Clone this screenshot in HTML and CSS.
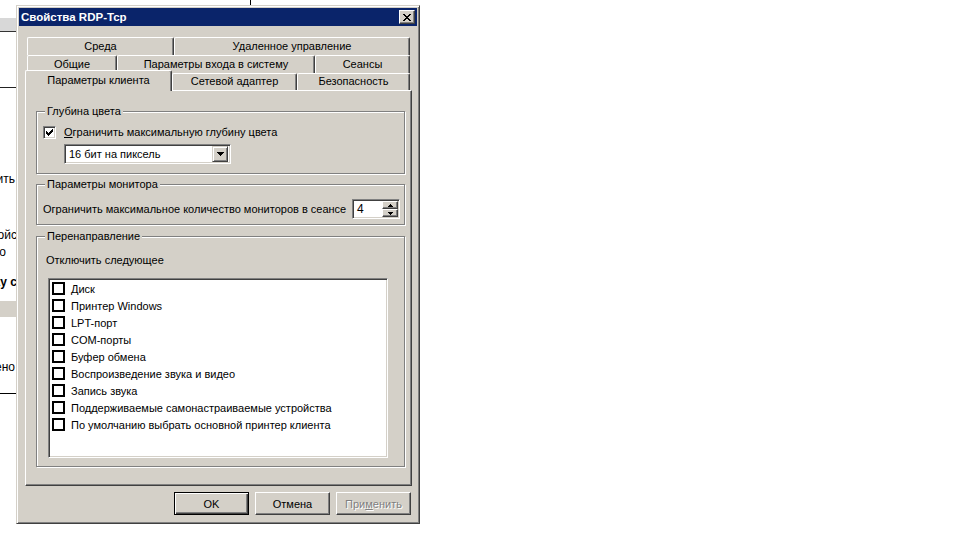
FILE: index.html
```html
<!DOCTYPE html>
<html lang="ru">
<head>
    <meta charset="UTF-8">
    <title>Свойства RDP-Tcp</title>
    <link rel="stylesheet" href="styles.css">
</head>
<body>
    <!-- окно на заднем плане, видна только полоска слева -->
    <div class="desk-window">
        <div class="dw-toolbar"></div>
        <div class="dw-rule"></div>
        <div class="dw-row dw-r1"><span>Разрешить</span></div>
        <div class="dw-row dw-r2"><span>Свойс</span></div>
        <div class="dw-row dw-r3"><span>Это</span></div>
        <div class="dw-row dw-r4 dw-bold"><span>Настройку с</span></div>
        <div class="dw-band"></div>
        <div class="dw-row dw-r5"><span>Подключено</span></div>
    </div>

    <div class="dialog">
        <div class="titlebar">
            <span class="title">Свойства RDP-Tcp</span>
            <button class="close-btn">
                <svg width="8" height="7" viewBox="0 0 8 7"><path d="M0 0h2v1H0z M6 0h2v1H6z M1 1h2v1H1z M5 1h2v1H5z M2 2h4v1H2z M3 3h2v1H3z M2 4h4v1H2z M1 5h2v1H1z M5 5h2v1H5z M0 6h2v1H0z M6 6h2v1H6z" fill="#000"/></svg>
            </button>
        </div>

        <div class="dlg-body">
            <div class="tabs">
                <div class="tab-row row-1">
                    <div class="tab">Среда</div>
                    <div class="tab">Удаленное управление</div>
                </div>
                <div class="tab-row row-2">
                    <div class="tab">Общие</div>
                    <div class="tab">Параметры входа в систему</div>
                    <div class="tab">Сеансы</div>
                </div>
                <div class="tab-row row-3">
                    <div class="tab active">Параметры клиента</div>
                    <div class="tab">Сетевой адаптер</div>
                    <div class="tab">Безопасность</div>
                </div>
            </div>

            <div class="tab-panel">
                <fieldset class="group group-color">
                    <legend>Глубина цвета</legend>
                    <div class="check-row">
                        <span class="check3d">
                            <svg width="7" height="7" viewBox="0 0 7 7"><path d="M6 0h1v1H6z M5 1h2v1H5z M0 2h1v1H0z M4 2h3v1H4z M0 3h2v1H0z M3 3h3v1H3z M0 4h5v1H0z M1 5h3v1H1z M2 6h1v1H2z" fill="#000"/></svg>
                        </span>
                        <span><u>О</u>граничить максимальную глубину цвета</span>
                    </div>
                    <div class="combo">
                        <span class="combo-text">16 бит на пиксель</span>
                        <span class="combo-btn">
                            <svg width="7" height="4" viewBox="0 0 7 4"><path d="M0 0h7v1H0z M1 1h5v1H1z M2 2h3v1H2z M3 3h1v1H3z" fill="#000"/></svg>
                        </span>
                    </div>
                </fieldset>

                <fieldset class="group group-monitor">
                    <legend>Параметры монитора</legend>
                    <div class="monitor-row">
                        <span>Ограничить максимальное количество мониторов в сеансе</span>
                        <div class="spin">
                            <span class="spin-text">4</span>
                            <div class="spin-btns">
                                <span class="spin-btn">
                                    <svg width="5" height="3" viewBox="0 0 5 3"><path d="M2 0h1v1H2z M1 1h3v1H1z M0 2h5v1H0z" fill="#000"/></svg>
                                </span>
                                <span class="spin-btn">
                                    <svg width="5" height="3" viewBox="0 0 5 3"><path d="M0 0h5v1H0z M1 1h3v1H1z M2 2h1v1H2z" fill="#000"/></svg>
                                </span>
                            </div>
                        </div>
                    </div>
                </fieldset>

                <fieldset class="group group-redirect">
                    <legend>Перенаправление</legend>
                    <div class="redirect-caption">Отключить следующее</div>
                    <div class="listbox">
                        <div class="list-item"><span class="flat-check"></span>Диск</div>
                        <div class="list-item"><span class="flat-check"></span>Принтер Windows</div>
                        <div class="list-item"><span class="flat-check"></span>LPT-порт</div>
                        <div class="list-item"><span class="flat-check"></span>COM-порты</div>
                        <div class="list-item"><span class="flat-check"></span>Буфер обмена</div>
                        <div class="list-item"><span class="flat-check"></span>Воспроизведение звука и видео</div>
                        <div class="list-item"><span class="flat-check"></span>Запись звука</div>
                        <div class="list-item"><span class="flat-check"></span>Поддерживаемые самонастраиваемые устройства</div>
                        <div class="list-item"><span class="flat-check"></span>По умолчанию выбрать основной принтер клиента</div>
                    </div>
                </fieldset>
            </div>
        </div>

        <div class="dlg-buttons">
            <button class="btn btn-default">OK</button>
            <button class="btn">Отмена</button>
            <button class="btn btn-disabled">При<u>м</u>енить</button>
        </div>
    </div>
</body>
</html>
```

FILE: styles.css
```css
body, html {
    margin: 0;
    padding: 0;
}

body {
    width: 960px;
    height: 546px;
    overflow: hidden;
    position: relative;
    background: #fff;
    color: #000;
    font-family: "Liberation Sans", "DejaVu Sans", sans-serif;
    font-size: 11px;
    line-height: 14px;
}

/* фоновое окно */
.desk-window {
    position: absolute;
    left: -240px;
    top: -20px;
    width: 491px;
    height: 414px;
    box-sizing: border-box;
    border: 1px solid #000;
    background: #fff;
    display: flex;
    flex-direction: column;
    font-size: 12px;
}

.dw-toolbar {
    margin-top: 37px;
    height: 13px;
    background: #d8d8d8;
    border-bottom: 1px solid #333;
}

.dw-rule {
    margin-top: 55px;
    height: 1px;
    background: #222;
}

.dw-row {
    width: 256px;
    box-sizing: border-box;
    display: flex;
    justify-content: flex-end;
    white-space: nowrap;
    height: 14px;
}

.dw-r1 { margin-top: 84px; padding-right: 2px; }
.dw-r2 { margin-top: 42px; }
.dw-r3 { margin-top: 3px; padding-right: 11px; }
.dw-r4 { margin-top: 16px; }
.dw-r5 { margin-top: 43px; padding-right: 2px; }

.dw-bold {
    font-weight: bold;
}

.dw-band {
    margin-top: 12px;
    height: 16px;
    background: #d4d0c8;
}

/* диалог */
.dialog {
    position: absolute;
    left: 16px;
    top: 5px;
    width: 404px;
    height: 519px;
    box-sizing: border-box;
    padding: 2px;
    background: #d4d0c8;
    border: 1px solid;
    border-color: #d4d0c8 #404040 #404040 #d4d0c8;
    box-shadow: inset 1px 1px #fff, inset -1px -1px #808080;
    display: flex;
    flex-direction: column;
}

.titlebar {
    height: 18px;
    background: #0a246a;
    color: #fff;
    display: flex;
    align-items: center;
    justify-content: space-between;
    padding: 0 2px 0 2px;
}

.title {
    font-weight: bold;
    font-size: 11.5px;
}

.close-btn {
    width: 16px;
    height: 14px;
    padding: 0;
    box-sizing: border-box;
    background: #d4d0c8;
    border: 1px solid;
    border-color: #fff #404040 #404040 #fff;
    box-shadow: inset -1px -1px #808080;
    display: flex;
    align-items: center;
    justify-content: center;
}

.dlg-body {
    flex: 1;
    display: flex;
    flex-direction: column;
    padding: 11px 5px 0 6px;
}

/* вкладки */
.tabs {
    padding: 0 2px;
}

.tab-row {
    display: grid;
    height: 18px;
}

.row-1 { grid-template-columns: 147px 1fr; }
.row-2 { grid-template-columns: 90px 198px 1fr; }
.row-3 { grid-template-columns: 145px 125px 1fr; height: 17px; }

.tab {
    box-sizing: border-box;
    background: #d4d0c8;
    border-top: 1px solid #fff;
    border-left: 1px solid #fff;
    border-right: 1px solid #404040;
    box-shadow: inset -1px 0 #808080;
    border-radius: 2px 2px 0 0;
    display: flex;
    align-items: center;
    justify-content: center;
    white-space: nowrap;
    padding-bottom: 2px;
}

.tab.active {
    position: relative;
    z-index: 1;
    margin: -3px 0 -1px -2px;
    padding-bottom: 3px;
}

.tab-panel {
    flex: 1;
    box-sizing: border-box;
    border: 1px solid;
    border-color: #fff #404040 #404040 #fff;
    box-shadow: inset -1px -1px #808080;
    padding: 0 6px 0 10px;
}

/* группы */
.group {
    margin: 0;
    padding: 0;
    min-width: 0;
    border: 1px solid #808080;
    box-shadow: 1px 1px 0 #fff, inset 1px 1px 0 #fff;
}

.group legend {
    margin-left: 8px;
    padding: 0 2px;
    background: #d4d0c8;
    line-height: 14px;
}

.group-color {
    margin-top: 13px;
    padding-bottom: 9px;
}

.check-row {
    margin-top: 6px;
    height: 16px;
    padding-left: 6px;
    display: flex;
    align-items: center;
    gap: 8px;
}

.check3d {
    width: 13px;
    height: 13px;
    box-sizing: border-box;
    background: #fff;
    border: 1px solid;
    border-color: #808080 #fff #fff #808080;
    box-shadow: inset 1px 1px #404040, inset -1px -1px #d4d0c8;
    display: flex;
    align-items: center;
    justify-content: center;
}

.combo {
    margin: 4px 0 0 27px;
    width: 167px;
    height: 20px;
    box-sizing: border-box;
    background: #fff;
    border: 1px solid;
    border-color: #808080 #fff #fff #808080;
    box-shadow: inset 1px 1px #404040, inset -1px -1px #d4d0c8;
    padding: 2px;
    display: flex;
    align-items: center;
}

.combo-text {
    flex: 1;
    padding-left: 2px;
}

.combo-btn {
    width: 16px;
    height: 16px;
    box-sizing: border-box;
    background: #d4d0c8;
    border: 1px solid;
    border-color: #d4d0c8 #404040 #404040 #d4d0c8;
    box-shadow: inset 1px 1px #fff, inset -1px -1px #808080;
    display: flex;
    align-items: center;
    justify-content: center;
}

.group-monitor {
    margin-top: 3px;
    padding-bottom: 5px;
}

.monitor-row {
    margin-top: 8px;
    padding: 0 4px 0 6px;
    height: 20px;
    display: flex;
    align-items: center;
    justify-content: space-between;
    white-space: nowrap;
}

.spin {
    width: 48px;
    height: 20px;
    box-sizing: border-box;
    background: #fff;
    border: 1px solid;
    border-color: #808080 #fff #fff #808080;
    box-shadow: inset 1px 1px #404040, inset -1px -1px #d4d0c8;
    padding: 2px 1px 2px 2px;
    display: flex;
    align-items: center;
}

.spin-text {
    flex: 1;
    padding-left: 2px;
    font-size: 12px;
}

.spin-btns {
    width: 16px;
    height: 16px;
    display: flex;
    flex-direction: column;
}

.spin-btn {
    flex: 1;
    box-sizing: border-box;
    background: #d4d0c8;
    border: 1px solid;
    border-color: #fff #404040 #404040 #fff;
    box-shadow: inset -1px -1px #808080;
    display: flex;
    align-items: center;
    justify-content: center;
}

.group-redirect {
    margin-top: 4px;
    padding-bottom: 8px;
}

.redirect-caption {
    margin-top: 10px;
    padding-left: 9px;
}

.listbox {
    margin: 11px 0 0 11px;
    width: 340px;
    height: 180px;
    box-sizing: border-box;
    background: #fff;
    border: 1px solid;
    border-color: #808080 #fff #fff #808080;
    box-shadow: inset 1px 1px #404040, inset -1px -1px #d4d0c8;
    padding: 1px 3px;
}

.list-item {
    height: 17px;
    display: flex;
    align-items: center;
    white-space: nowrap;
}

.flat-check {
    width: 13px;
    height: 13px;
    box-sizing: border-box;
    border: 2px solid #000;
    margin-right: 6px;
}

/* кнопки */
.dlg-buttons {
    display: flex;
    justify-content: flex-end;
    gap: 6px;
    padding: 6px 6px 6px 0;
}

.btn {
    width: 75px;
    height: 23px;
    box-sizing: border-box;
    padding: 0;
    font: inherit;
    color: #000;
    background: #d4d0c8;
    border: 1px solid;
    border-color: #fff #404040 #404040 #fff;
    box-shadow: inset -1px -1px #808080;
}

.btn-default {
    border-color: #000;
    box-shadow: inset 1px 1px #fff, inset -1px -1px #404040, inset -2px -2px #808080;
}

.btn-disabled {
    color: #808080;
    text-shadow: 1px 1px #fff;
}
```
